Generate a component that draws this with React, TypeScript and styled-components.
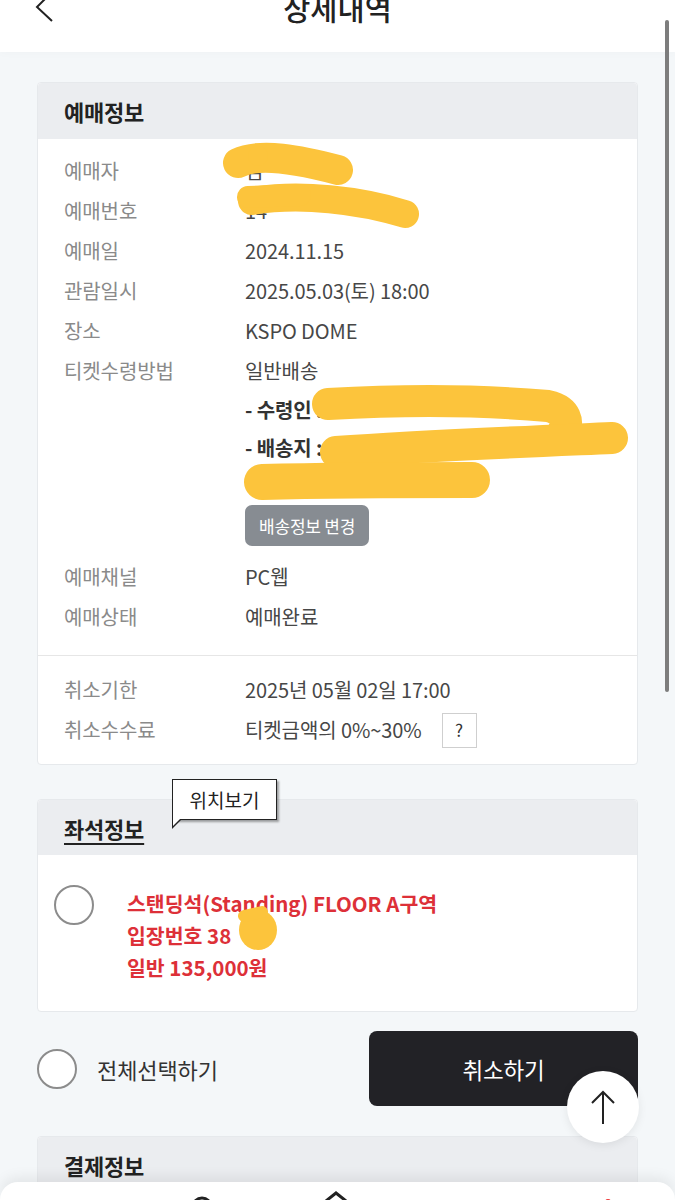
import React from 'react';
import styled, { createGlobalStyle } from 'styled-components';

const GlobalStyle = createGlobalStyle`
  html, body { margin: 0; padding: 0; }
  body {
    background: #f4f7f9;
    font-family: 'Noto Sans CJK KR', 'Noto Sans', sans-serif;
    overflow: hidden;
  }
  * { box-sizing: border-box; }
`;

const Page = styled.div`
  position: relative;
  width: 675px;
  height: 1200px;
  overflow: hidden;
  background: #f4f7f9;
`;

const Header = styled.header`
  height: 52px;
  background: #fff;
  display: grid;
  grid-template-columns: 90px 1fr 90px;
  align-items: start;
  box-shadow: 0 2px 8px rgba(0, 0, 0, 0.02);
`;

const BackButton = styled.svg`
  margin: -10px 0 0 34px;
  display: block;
`;

const Title = styled.h1`
  margin: -9px 0 0;
  text-align: center;
  font-size: 29.5px;
  line-height: 32px;
  font-weight: 500;
  color: #222;
`;

const Content = styled.main`
  padding: 30px 37px 0;
  display: flex;
  flex-direction: column;
`;

const Card = styled.section<{ $mt?: number }>`
  margin-top: ${(p) => p.$mt ?? 0}px;
  background: #fff;
  border: 1px solid #e6e9ec;
  border-radius: 4px;
`;

const CardHead = styled.div<{ $h?: number }>`
  position: relative;
  height: ${(p) => p.$h ?? 56}px;
  background: #ebedf0;
  border-radius: 4px 4px 0 0;
  display: flex;
  align-items: center;
  padding-left: 26px;
`;

const CardTitle = styled.h2<{ $underline?: boolean }>`
  margin: 0;
  font-size: 22px;
  font-weight: 700;
  color: #222;
  letter-spacing: -0.2px;
  text-decoration: ${(p) => (p.$underline ? 'underline' : 'none')};
  text-underline-offset: 5px;
  text-decoration-thickness: 1.5px;
`;

const InfoBlock = styled.div<{ $pt: number; $pb: number; $divider?: boolean }>`
  padding: ${(p) => p.$pt}px 26px ${(p) => p.$pb}px;
  border-top: ${(p) => (p.$divider ? '1px solid #e6e6e6' : 'none')};
`;

const Row = styled.div`
  display: grid;
  grid-template-columns: 181px 1fr;
  font-size: 20px;
  line-height: 40px;
  letter-spacing: -0.1px;
`;

const Label = styled.div`
  color: #8a8a8a;
`;

const Value = styled.div`
  color: #474747;
  display: flex;
  flex-direction: column;
  align-items: flex-start;
`;

const InlineValue = styled.div`
  color: #474747;
  display: flex;
  align-items: center;
`;

const SubLine = styled.div<{ $h?: number }>`
  line-height: ${(p) => p.$h ?? 38}px;
  height: ${(p) => p.$h ?? 38}px;
  font-weight: 700;
  color: #333;
`;

const SmallButton = styled.button`
  margin: 4px 0 11px;
  height: 41px;
  padding: 0 14px;
  border: none;
  border-radius: 7px;
  background: #878c92;
  color: #fff;
  font-family: inherit;
  font-size: 17px;
  letter-spacing: -0.2px;
`;

const HelpBox = styled.span`
  margin-left: 20px;
  width: 35px;
  height: 35px;
  border: 1px solid #cfcfcf;
  display: inline-flex;
  align-items: center;
  justify-content: center;
  font-size: 17px;
  color: #333;
`;

const Tooltip = styled.div`
  position: absolute;
  left: 134px;
  top: -21px;
  width: 105px;
  height: 41px;
  background: #fff;
  border: 1.5px solid #222;
  box-shadow: 2px 2px 2px rgba(0, 0, 0, 0.35);
  display: flex;
  align-items: center;
  justify-content: center;
  font-size: 19px;
  color: #222;
  &::before {
    content: '';
    position: absolute;
    left: -1.5px;
    top: 100%;
    width: 0;
    height: 0;
    border-top: 10px solid #222;
    border-right: 10px solid transparent;
  }
  &::after {
    content: '';
    position: absolute;
    left: 0;
    top: 100%;
    width: 0;
    height: 0;
    border-top: 7px solid #fff;
    border-right: 7px solid transparent;
  }
`;

const SeatBody = styled.div`
  display: flex;
  align-items: flex-start;
  gap: 33px;
  padding: 30px 0 28px 16px;
`;

const Radio = styled.span`
  flex: none;
  width: 40px;
  height: 40px;
  border-radius: 50%;
  border: 2px solid #8c8c8c;
  background: #fff;
`;

const SeatText = styled.div`
  margin-top: 2px;
  display: flex;
  flex-direction: column;
  font-size: 20.5px;
  line-height: 32px;
  font-weight: 700;
  color: #dd3038;
  letter-spacing: 0;
`;

const ActionRow = styled.div`
  margin-top: 19px;
  display: flex;
  align-items: center;
  justify-content: space-between;
`;

const SelectAll = styled.label`
  display: flex;
  align-items: center;
  gap: 20px;
  font-size: 22px;
  color: #333;
  letter-spacing: -0.1px;
`;

const CancelButton = styled.button`
  width: 269px;
  height: 75px;
  border: none;
  border-radius: 8px;
  background: #222226;
  color: #fff;
  font-family: inherit;
  font-size: 22.5px;
  letter-spacing: -0.2px;
`;

const TopButton = styled.div`
  position: absolute;
  left: 567px;
  top: 1071px;
  width: 72px;
  height: 72px;
  border-radius: 50%;
  background: #fff;
  box-shadow: 0 2px 10px rgba(0, 0, 0, 0.08);
  display: flex;
  align-items: center;
  justify-content: center;
`;

const ScrollBar = styled.div`
  position: absolute;
  left: 665px;
  top: 20px;
  width: 4px;
  height: 672px;
  border-radius: 2px;
  background: #7d7d7d;
`;

const BottomSheet = styled.div`
  position: absolute;
  left: 0;
  right: 0;
  bottom: 0;
  height: 18px;
  background: #fff;
  border-radius: 22px 22px 0 0;
  box-shadow: 0 -4px 14px rgba(0, 0, 0, 0.08);
  overflow: hidden;
`;

const Scribbles = styled.svg`
  position: absolute;
  left: 0;
  top: 0;
  pointer-events: none;
`;

const Y = '#fcc43c';

export default function App() {
  return (
    <>
      <GlobalStyle />
      <Page>
        <Header>
          <BackButton width="24" height="36" viewBox="0 0 24 36">
            <path d="M18 2 L3 17 L18 31" fill="none" stroke="#222" strokeWidth="2" />
          </BackButton>
          <Title>상세내역</Title>
          <div />
        </Header>
        <Content>
          <Card>
            <CardHead>
              <CardTitle>예매정보</CardTitle>
            </CardHead>
            <InfoBlock $pt={12} $pb={18}>
              <Row>
                <Label>예매자</Label>
                <Value>김</Value>
              </Row>
              <Row>
                <Label>예매번호</Label>
                <Value>14</Value>
              </Row>
              <Row>
                <Label>예매일</Label>
                <Value>2024.11.15</Value>
              </Row>
              <Row>
                <Label>관람일시</Label>
                <Value>2025.05.03(토) 18:00</Value>
              </Row>
              <Row>
                <Label>장소</Label>
                <Value>KSPO DOME</Value>
              </Row>
              <Row>
                <Label>티켓수령방법</Label>
                <Value>
                  일반배송
                  <SubLine>- 수령인 :</SubLine>
                  <SubLine>- 배송지 :</SubLine>
                  <SubLine $h={34} />
                  <SmallButton>배송정보 변경</SmallButton>
                </Value>
              </Row>
              <Row>
                <Label>예매채널</Label>
                <Value>PC웹</Value>
              </Row>
              <Row>
                <Label>예매상태</Label>
                <Value>예매완료</Value>
              </Row>
            </InfoBlock>
            <InfoBlock $pt={14} $pb={14} $divider>
              <Row>
                <Label>취소기한</Label>
                <Value>2025년 05월 02일 17:00</Value>
              </Row>
              <Row>
                <Label>취소수수료</Label>
                <InlineValue>
                  티켓금액의 0%~30%
                  <HelpBox>?</HelpBox>
                </InlineValue>
              </Row>
            </InfoBlock>
          </Card>

          <Card $mt={34}>
            <CardHead $h={55}>
              <CardTitle $underline>좌석정보</CardTitle>
              <Tooltip>위치보기</Tooltip>
            </CardHead>
            <SeatBody>
              <Radio />
              <SeatText>
                <span>스탠딩석(Standing) FLOOR A구역</span>
                <span>입장번호 38</span>
                <span>일반 135,000원</span>
              </SeatText>
            </SeatBody>
          </Card>

          <ActionRow>
            <SelectAll>
              <Radio />
              전체선택하기
            </SelectAll>
            <CancelButton>취소하기</CancelButton>
          </ActionRow>

          <Card $mt={30}>
            <CardHead>
              <CardTitle>결제정보</CardTitle>
            </CardHead>
          </Card>
        </Content>

        <Scribbles width="675" height="1200" viewBox="0 0 675 1200">
          <g fill="none" stroke={Y} strokeLinecap="round" strokeLinejoin="round">
            <path d="M238 163 C260 152 300 160 338 170" strokeWidth="30" />
            <circle cx="258" cy="156" r="10" fill={Y} stroke="none" />
            <path d="M252 201 C300 193 360 200 405 214" strokeWidth="28" />
            <path d="M248 197 L300 195" strokeWidth="22" />
            <path d="M328 404 C400 400 480 400 548 406 C566 410 570 422 562 434" strokeWidth="32" />
            <path d="M336 452 C420 446 520 442 612 438" strokeWidth="32" />
            <path d="M262 482 C340 480 410 480 472 480" strokeWidth="36" />
            <ellipse cx="258" cy="930" rx="19" ry="20" fill={Y} stroke="none" />
            <path d="M244 916 L262 912" strokeWidth="12" />
          </g>
        </Scribbles>

        <TopButton>
          <svg width="40" height="40" viewBox="0 0 40 40">
            <path d="M20 5 V37 M9 16 L20 5 L31 16" fill="none" stroke="#222" strokeWidth="2" />
          </svg>
        </TopButton>

        <ScrollBar />

        <BottomSheet>
          <svg width="675" height="18" viewBox="0 0 675 18">
            <circle cx="202" cy="24" r="9" fill="none" stroke="#222" strokeWidth="3" />
            <path d="M326 18 L336 10 L346 18" fill="none" stroke="#222" strokeWidth="3" />
            <circle cx="608" cy="19" r="3" fill="#e33" />
          </svg>
        </BottomSheet>
      </Page>
    </>
  );
}
